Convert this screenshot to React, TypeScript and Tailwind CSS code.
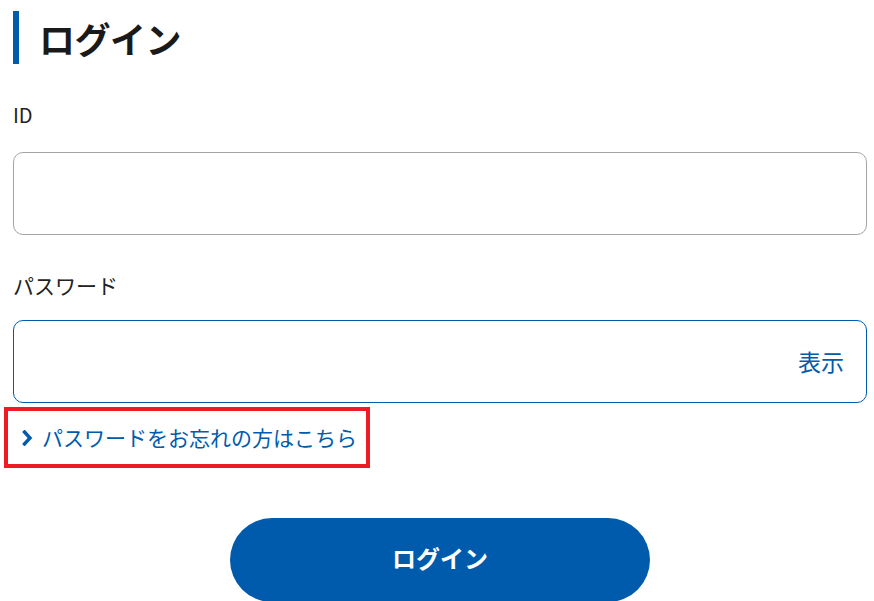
export default function App() {
  return (
    <div
      className="w-[874px] h-[601px] overflow-hidden bg-white text-[#222]"
      style={{ fontFamily: '"Noto Sans CJK JP", "Noto Sans", sans-serif' }}
    >
      <div className="pl-[13px] pr-[7px]">
        {/* Heading */}
        <div className="mt-[11px] h-[53px] border-l-[6px] border-[#005bac] pl-[20px] flex items-center">
          <h1 className="text-[36px] font-bold leading-none tracking-[-0.5px] text-[#1a1a1a]">ログイン</h1>
        </div>

        {/* ID */}
        <label className="block mt-[41px] text-[20px] leading-[20px]">ID</label>
        <div className="mt-[27px] h-[83px] rounded-[10px] border-[1.5px] border-[#a3a6a9]" />

        {/* Password */}
        <label className="block mt-[40px] text-[21px] leading-[20px]">パスワード</label>
        <div className="mt-[25px] h-[83px] rounded-[10px] border-[1.5px] border-[#005bac] flex items-center justify-end pr-[22px]">
          <span className="text-[23px] leading-none text-[#005bac]">表示</span>
        </div>

        {/* Forgot password link (annotated) */}
        <div className="mt-[4px] ml-[-9px] w-[366px] h-[61px] border-4 border-[#ed1c24] flex items-center pl-[14px] gap-[9px]">
          <svg width="11" height="16" viewBox="0 0 11 16" fill="none">
            <path d="M2.5 2l5.5 6-5.5 6" stroke="#005bac" strokeWidth="3.4" strokeLinecap="square" strokeLinejoin="miter" />
          </svg>
          <span className="text-[21px] leading-none text-[#005bac]">パスワードをお忘れの方はこちら</span>
        </div>

        {/* Submit */}
        <button className="mt-[50px] mx-auto flex items-center justify-center pb-[5px] w-[420px] h-[84px] rounded-full bg-[#005bac] text-white text-[24px] font-bold">
          ログイン
        </button>
      </div>
    </div>
  );
}
